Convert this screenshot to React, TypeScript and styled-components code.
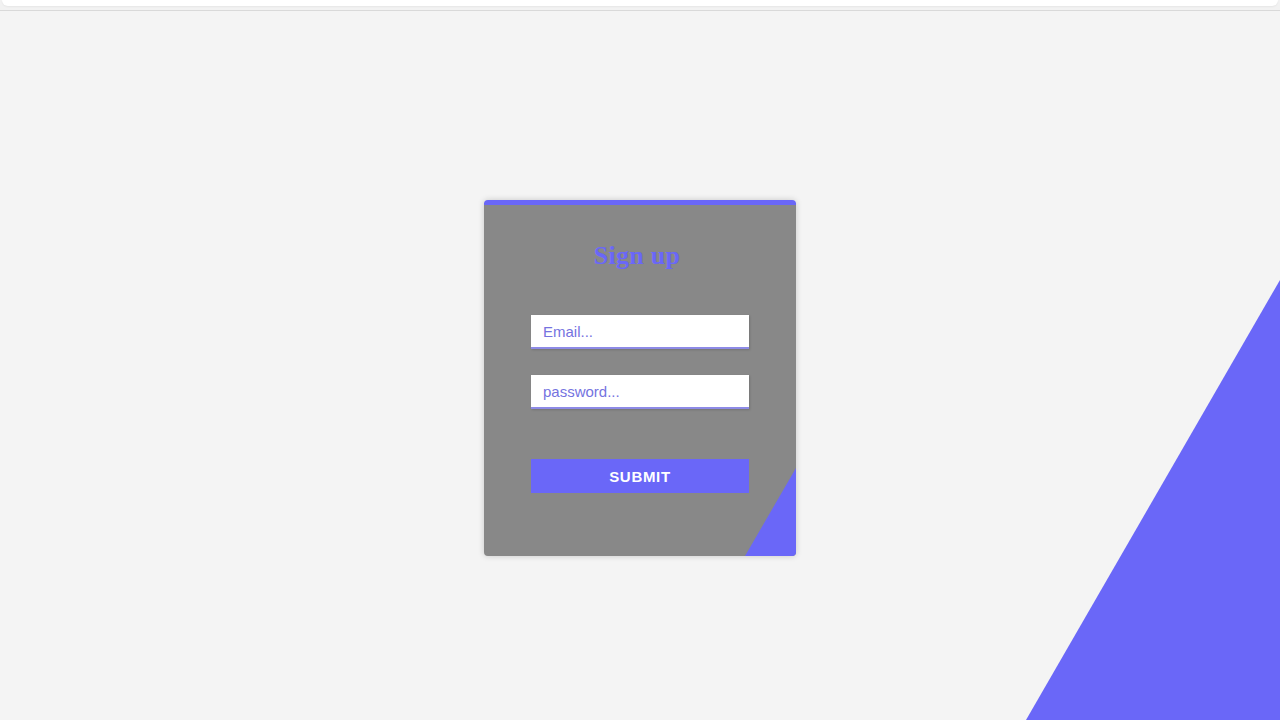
import React, { FC } from 'react';
import styled, { createGlobalStyle } from 'styled-components';

const ACCENT = '#6a67f8';

const GlobalStyle = createGlobalStyle`
  html, body {
    margin: 0;
    padding: 0;
    height: 100%;
    background: #f4f4f4;
    font-family: 'Liberation Sans', Arial, sans-serif;
    overflow: hidden;
  }
`;

const Page = styled.div`
  position: relative;
  width: 100vw;
  height: 100vh;
  overflow: hidden;

  &::after {
    content: '';
    position: absolute;
    right: 0;
    bottom: 0;
    width: 254px;
    height: 440px;
    background: ${ACCENT};
    clip-path: polygon(100% 0, 100% 100%, 0 100%);
  }
`;

const TopStrip = styled.div`
  height: 10px;
  border-bottom: 1px solid #d9d9d9;
  background: #f2f2f2;
  padding: 0 2px;
  box-sizing: content-box;

  > div {
    height: 6px;
    background: #fff;
    border-radius: 0 0 8px 8px;
    box-shadow: 0 1px 2px rgba(0, 0, 0, 0.05);
  }
`;

const Main = styled.main`
  display: flex;
  justify-content: center;
  padding-top: 189px;
`;

const Card = styled.form`
  position: relative;
  z-index: 1;
  width: 312px;
  height: 356px;
  box-sizing: border-box;
  background: #888888;
  border-top: 5px solid ${ACCENT};
  border-radius: 4px;
  box-shadow: 0 0 6px rgba(0, 0, 0, 0.18);
  overflow: hidden;
  display: flex;
  flex-direction: column;
  align-items: center;
  padding: 0 47px;

  &::after {
    content: '';
    position: absolute;
    right: 0;
    bottom: 0;
    width: 51px;
    height: 88px;
    background: ${ACCENT};
    clip-path: polygon(100% 0, 100% 100%, 0 100%);
  }
`;

const Title = styled.h2`
  margin: 33px 6px 0 0;
  height: 36px;
  font-family: 'Liberation Serif', 'Times New Roman', serif;
  font-size: 26px;
  font-weight: bold;
  color: ${ACCENT};
  line-height: 36px;
  letter-spacing: 0.3px;
`;

const Field = styled.input<{ $gap: number }>`
  display: block;
  width: 218px;
  height: 34px;
  box-sizing: border-box;
  margin-top: ${(p) => p.$gap}px;
  padding: 0 12px;
  border: none;
  border-bottom: 2px solid #8d8ae6;
  background: #fff;
  box-shadow: 1px 1px 2px rgba(0, 0, 0, 0.15);
  font-family: 'Liberation Sans', Arial, sans-serif;
  font-size: 15px;
  color: #555;
  outline: none;

  &::placeholder {
    color: #7573df;
  }
`;

const Submit = styled.button`
  width: 218px;
  height: 34px;
  margin-top: 50px;
  border: none;
  background: ${ACCENT};
  color: #fff;
  font-family: 'Liberation Sans', Arial, sans-serif;
  font-size: 15px;
  font-weight: bold;
  letter-spacing: 0.7px;
  cursor: pointer;
`;

const SignUp: FC = () => (
  <Card onSubmit={(e) => e.preventDefault()}>
    <Title>Sign up</Title>
    <Field $gap={41} type="email" placeholder="Email..." />
    <Field $gap={26} type="password" placeholder="password..." />
    <Submit type="submit">SUBMIT</Submit>
  </Card>
);

const App: FC = () => (
  <>
    <GlobalStyle />
    <Page>
      <TopStrip>
        <div />
      </TopStrip>
      <Main>
        <SignUp />
      </Main>
    </Page>
  </>
);

export default App;
